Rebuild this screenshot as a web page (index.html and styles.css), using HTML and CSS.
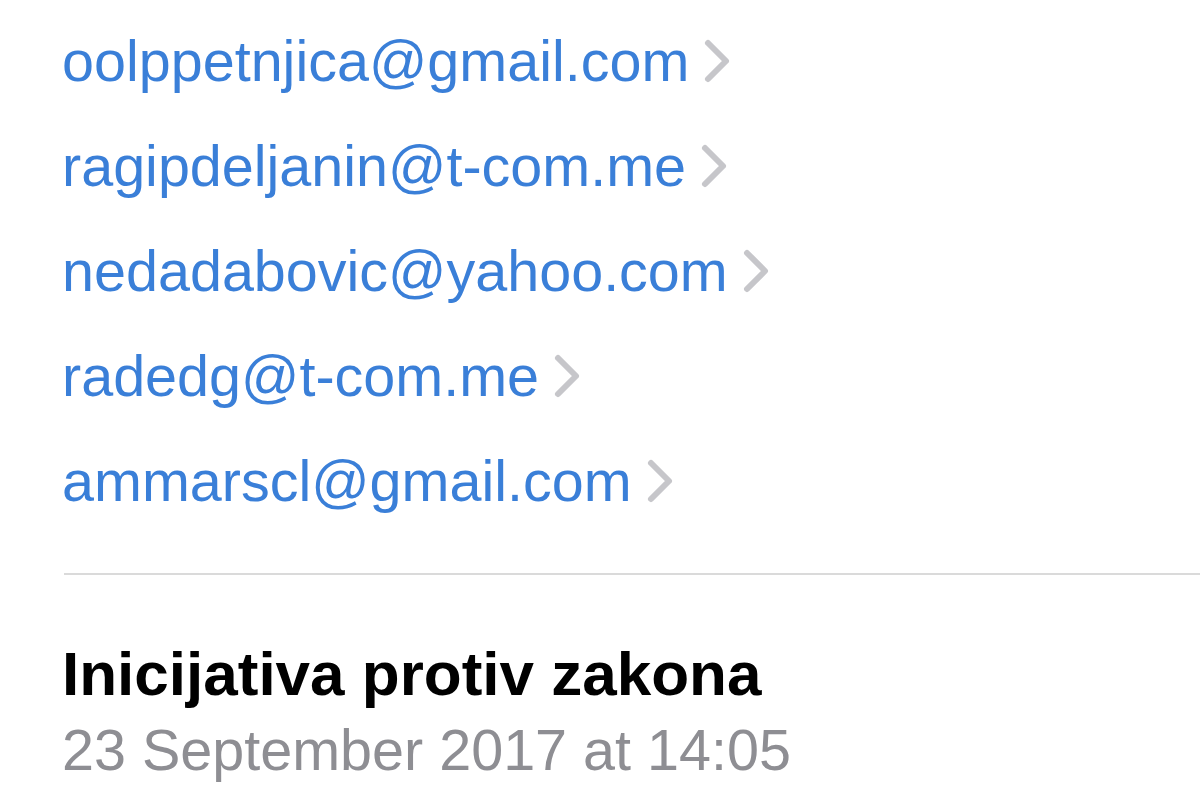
FILE: index.html
```html
<!DOCTYPE html>
<html lang="en">
<head>
    <meta charset="UTF-8">
    <title>Mail</title>
    <link rel="stylesheet" href="styles.css">
</head>
<body>
    <div class="mail">
        <ul class="recipients">
            <li class="recipient"><span class="address">oolppetnjica@gmail.com</span><svg class="chevron" viewBox="0 0 28 46"><polyline points="5,5 23,23 5,41"/></svg></li>
            <li class="recipient"><span class="address">ragipdeljanin@t-com.me</span><svg class="chevron" viewBox="0 0 28 46"><polyline points="5,5 23,23 5,41"/></svg></li>
            <li class="recipient"><span class="address">nedadabovic@yahoo.com</span><svg class="chevron" viewBox="0 0 28 46"><polyline points="5,5 23,23 5,41"/></svg></li>
            <li class="recipient"><span class="address">radedg@t-com.me</span><svg class="chevron" viewBox="0 0 28 46"><polyline points="5,5 23,23 5,41"/></svg></li>
            <li class="recipient"><span class="address">ammarscl@gmail.com</span><svg class="chevron" viewBox="0 0 28 46"><polyline points="5,5 23,23 5,41"/></svg></li>
        </ul>
        <div class="separator"></div>
        <div class="header">
            <div class="subject">Inicijativa protiv zakona</div>
            <div class="date">23 September 2017 at 14:05</div>
        </div>
    </div>
</body>
</html>
```
FILE: styles.css
```css
body, html {
    margin: 0;
    padding: 0;
    height: 100%;
    background: #ffffff;
    font-family: "Liberation Sans", Arial, sans-serif;
    overflow: hidden;
}
.mail {
    padding: 8px 0 0 62px;
}
.recipients {
    list-style: none;
    margin: 0;
    padding: 0;
}
.recipient {
    display: flex;
    align-items: center;
    gap: 14px;
    height: 105px;
}
.address {
    font-size: 57.5px;
    color: #3a7fd8;
}
.chevron {
    width: 28px;
    height: 46px;
    fill: none;
    stroke: #c6c6ca;
    stroke-width: 6;
    stroke-linecap: round;
    stroke-linejoin: round;
}
.separator {
    height: 2px;
    background: #dadada;
    margin: 40px 0 0 2px;
}
.header {
    padding-top: 64px;
}
.subject {
    font-size: 62px;
    font-weight: bold;
    color: #000000;
    line-height: 70px;
}
.date {
    font-size: 57.5px;
    color: #8e8e93;
    line-height: 70px;
    margin-top: 6px;
}
```
